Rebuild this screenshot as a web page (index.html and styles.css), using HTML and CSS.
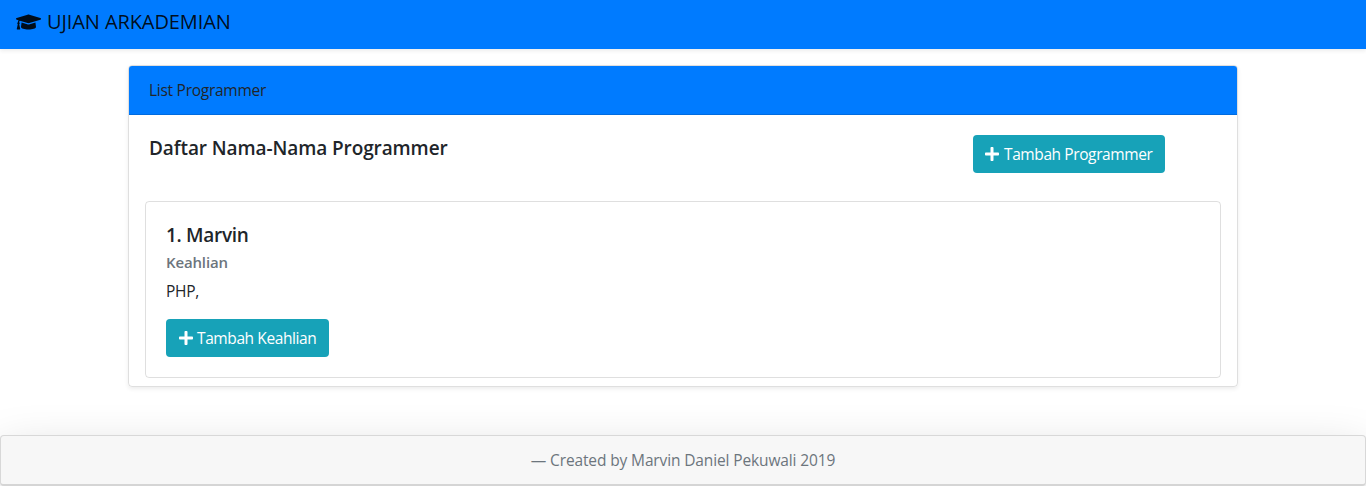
FILE: index.html
```html
<!DOCTYPE html>
<html lang="id">
<head>
<meta charset="utf-8">
<title>Ujian Arkademian</title>
<link rel="stylesheet" href="styles.css">
</head>
<body>
<svg class="defs" aria-hidden="true">
  <symbol id="plus" viewBox="0 0 448 512"><path d="M416 208H272V64c0-17.67-14.33-32-32-32h-32c-17.67 0-32 14.33-32 32v144H32c-17.67 0-32 14.33-32 32v32c0 17.67 14.33 32 32 32h144v144c0 17.67 14.33 32 32 32h32c17.67 0 32-14.33 32-32V304h144c17.67 0 32-14.33 32-32v-32c0-17.67-14.33-32-32-32z"/></symbol>
</svg>
<nav class="navbar">
  <svg class="cap" viewBox="0 0 640 512"><path d="M622.34 153.2L343.4 67.5c-15.2-4.67-31.6-4.67-46.79 0L17.66 153.2c-23.54 7.23-23.54 38.36 0 45.59l48.63 14.94c-10.67 13.19-17.23 29.28-17.88 46.9C38.78 266.15 32 276.11 32 288c0 10.78 5.68 19.85 13.86 25.65L20.33 428.53C18.11 438.52 25.71 448 35.94 448h56.11c10.24 0 17.84-9.48 15.62-19.47L82.14 313.65C90.32 307.85 96 298.78 96 288c0-11.57-6.47-21.25-15.66-26.87.76-15.02 8.44-28.3 20.69-36.72L296.6 284.5c9.06 2.78 26.44 6.25 46.79 0l278.95-85.7c23.55-7.24 23.55-38.36 0-45.6zM352.79 315.09c-28.53 8.76-52.84 3.92-65.59 0l-145.02-44.55L128 384c0 35.35 85.96 64 192 64s192-28.65 192-64l-14.18-113.47-145.03 44.56z"/></svg>
  <span class="brand">UJIAN ARKADEMIAN</span>
</nav>
<main class="card">
  <header class="card-header">List Programmer</header>
  <div class="title-row">
    <h1 class="title">Daftar Nama-Nama Programmer</h1>
    <button class="btn add-programmer"><svg class="plus"><use href="#plus"/></svg><span>Tambah Programmer</span></button>
  </div>
  <section class="person">
    <h2 class="name">1. Marvin</h2>
    <h3 class="subtitle">Keahlian</h3>
    <p class="skills">PHP,</p>
    <button class="btn add-skill"><svg class="plus"><use href="#plus"/></svg><span>Tambah Keahlian</span></button>
  </section>
</main>
<footer class="footer">— Created by Marvin Daniel Pekuwali 2019</footer>
</body>
</html>
```
FILE: styles.css
```css
* { box-sizing: border-box; }
body { margin: 0; height: 486px; overflow: hidden; background: #fff; color: #212529; font: 15.5px/24px "Open Sans", sans-serif; letter-spacing: -.27px; }
h1, h2, h3, p { margin: 0; }
.defs { display: none; }
.navbar { height: 49px; padding: 7px 16px; display: flex; gap: 6px; background: #007bff; box-shadow: 0 2px 4px rgba(0,0,0,.075); color: rgba(0,0,0,.9); }
.cap { width: 25px; height: 20px; margin-top: 5px; fill: currentColor; }
.brand { font-size: 20px; line-height: 30px; letter-spacing: -.09px; white-space: nowrap; }
.card { width: 1110px; height: 322px; margin: 16px auto 0; border: 1px solid rgba(0,0,0,.125); border-radius: 4px; box-shadow: 0 2px 4px rgba(0,0,0,.075); }
.card-header { height: 49px; padding: 12px 20px; background: #007bff; border-bottom: 1px solid rgba(0,0,0,.125); border-radius: 3px 3px 0 0; }
.title-row { height: 86px; padding: 20px 72px 0 20px; display: flex; justify-content: space-between; align-items: flex-start; }
.title { font-size: 19px; line-height: 26px; font-weight: 600; letter-spacing: -.1px; }
.btn { height: 38px; padding: 0 12px; display: flex; align-items: center; gap: 5px; border: 0; border-radius: 4px; background: #17a2b8; color: #fff; font: inherit; letter-spacing: -.4px; white-space: nowrap; }
.plus { width: 14px; height: 16px; flex: none; fill: currentColor; }
.add-programmer { width: 192px; }
.add-skill { width: 163px; padding-left: 13px; gap: 4px; }
.person { height: 177px; margin: 0 16px; padding: 20px; border: 1px solid rgba(0,0,0,.125); border-radius: 4px; }
.name { font-size: 19px; line-height: 26px; font-weight: 600; letter-spacing: -.3px; margin-bottom: 4px; }
.subtitle { font-size: 15px; line-height: 21px; font-weight: 600; letter-spacing: -.15px; color: #6c757d; margin-bottom: 6px; }
.skills { margin-bottom: 16px; }
.footer { margin-top: 48px; height: 51px; padding: 12px; border: 1px solid rgba(0,0,0,.125); border-bottom: 2px solid #d5d5d5; border-radius: 4px; background: #f7f7f7; color: #6c757d; letter-spacing: -.13px; text-align: center; box-shadow: 0 16px 48px rgba(0,0,0,.175); }
```
